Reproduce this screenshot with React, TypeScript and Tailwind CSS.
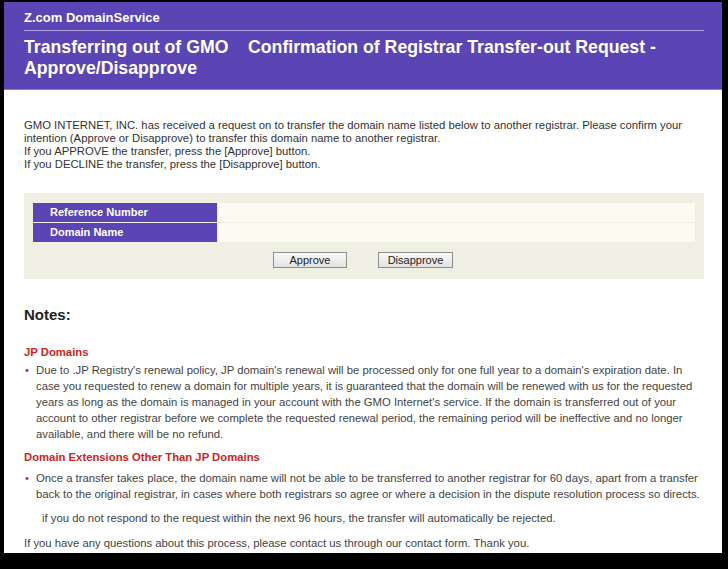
export default function App() {
  const font = { fontFamily: '"Liberation Sans", Arial, sans-serif' };
  return (
    <div className="h-[569px] w-[728px] overflow-hidden bg-black pl-[4px] pt-[2px]" style={font}>
      <div className="h-[551px] w-[718px] overflow-hidden bg-white">
        <header className="h-[88px] border-b border-[#8a7fd0] bg-[#5b45b4] px-[20px] pt-[8px] text-white">
          <div className="pb-[4px] text-[13px] font-bold leading-[16px]">Z.com DomainService</div>
          <div className="h-px w-[680px] bg-[#a89ee0]" />
          <h1 className="pt-[6px] text-[17.7px] font-bold leading-[21px]">
            Transferring out of GMO&nbsp;&nbsp;&nbsp; Confirmation of Registrar Transfer-out Request -
            <br />
            Approve/Disapprove
          </h1>
        </header>

        <div className="px-[20px] pt-[29px] text-[11.3px] leading-[13px] text-[#333]">
          <p>
            GMO INTERNET, INC. has received a request on to transfer the domain name listed below to another registrar. Please confirm your
            <br />
            intention (Approve or Disapprove) to transfer this domain name to another registrar.
            <br />
            If you APPROVE the transfer, press the [Approve] button.
            <br />
            If you DECLINE the transfer, press the [Disapprove] button.
          </p>

          <div className="mt-[22px] w-[680px] bg-[#efefe4] px-[9px] pb-[11px] pt-[10px]">
            <div className="flex flex-col gap-px">
              <div className="flex h-[19px]">
                <div className="w-[184px] bg-[#5b45b4] pl-[17px] text-[11px] font-bold leading-[19px] text-white">Reference Number</div>
                <div className="ml-px flex-1 bg-[#fbfbf1]" />
              </div>
              <div className="flex h-[19px]">
                <div className="w-[184px] bg-[#5b45b4] pl-[17px] text-[11px] font-bold leading-[19px] text-white">Domain Name</div>
                <div className="ml-px flex-1 bg-[#fbfbf1]" />
              </div>
            </div>
            <div className="mt-[10px] flex justify-center gap-[31px] pr-[2px]">
              <button className="h-[16px] w-[74px] border border-[#8e8e8e] bg-gradient-to-b from-[#fafafa] to-[#e2e2e2] text-[11px] leading-[14px] text-[#222]">
                Approve
              </button>
              <button className="h-[16px] w-[75px] border border-[#8e8e8e] bg-gradient-to-b from-[#fafafa] to-[#e2e2e2] text-[11px] leading-[14px] text-[#222]">
                Disapprove
              </button>
            </div>
          </div>

          <h2 className="mt-[27px] text-[15px] font-bold leading-[18px] text-[#222]">Notes:</h2>

          <h3 className="mt-[21px] text-[11.3px] font-bold leading-[14px] text-[#cc261c]">JP Domains</h3>
          <ul className="mt-[3px] text-[11.3px] leading-[16px] text-[#444]">
            <li className="flex">
              <span className="w-[12px] shrink-0 pl-[1px] text-[#cc261c]">•</span>
              <span>
                Due to .JP Registry's renewal policy, JP domain's renewal will be processed only for one full year to a domain's expiration date. In case you requested to renew a domain for multiple years, it is guaranteed that the domain will be renewed with us for the requested years as long as the domain is managed in your account with the GMO Internet's service. If the domain is transferred out of your account to other registrar before we complete the requested renewal period, the remaining period will be ineffective and no longer available, and there will be no refund.
              </span>
            </li>
          </ul>

          <h3 className="mt-[8px] text-[11.3px] font-bold leading-[14px] text-[#cc261c]">Domain Extensions Other Than JP Domains</h3>
          <ul className="mt-[6px] text-[11.3px] leading-[16px] text-[#444]">
            <li className="flex">
              <span className="w-[12px] shrink-0 pl-[1px] text-[#cc261c]">•</span>
              <span>
                Once a transfer takes place, the domain name will not be able to be transferred to another registrar for 60 days, apart from a transfer back to the original registrar, in cases where both registrars so agree or where a decision in the dispute resolution process so directs.
              </span>
            </li>
          </ul>

          <p className="mt-[8px] pl-[18px] text-[11.3px] leading-[16px] text-[#444]">
            if you do not respond to the request within the next 96 hours, the transfer will automatically be rejected.
          </p>
          <p className="mt-[9px] text-[11.3px] leading-[16px] text-[#444]">
            If you have any questions about this process, please contact us through our contact form. Thank you.
          </p>
        </div>
      </div>
    </div>
  );
}
